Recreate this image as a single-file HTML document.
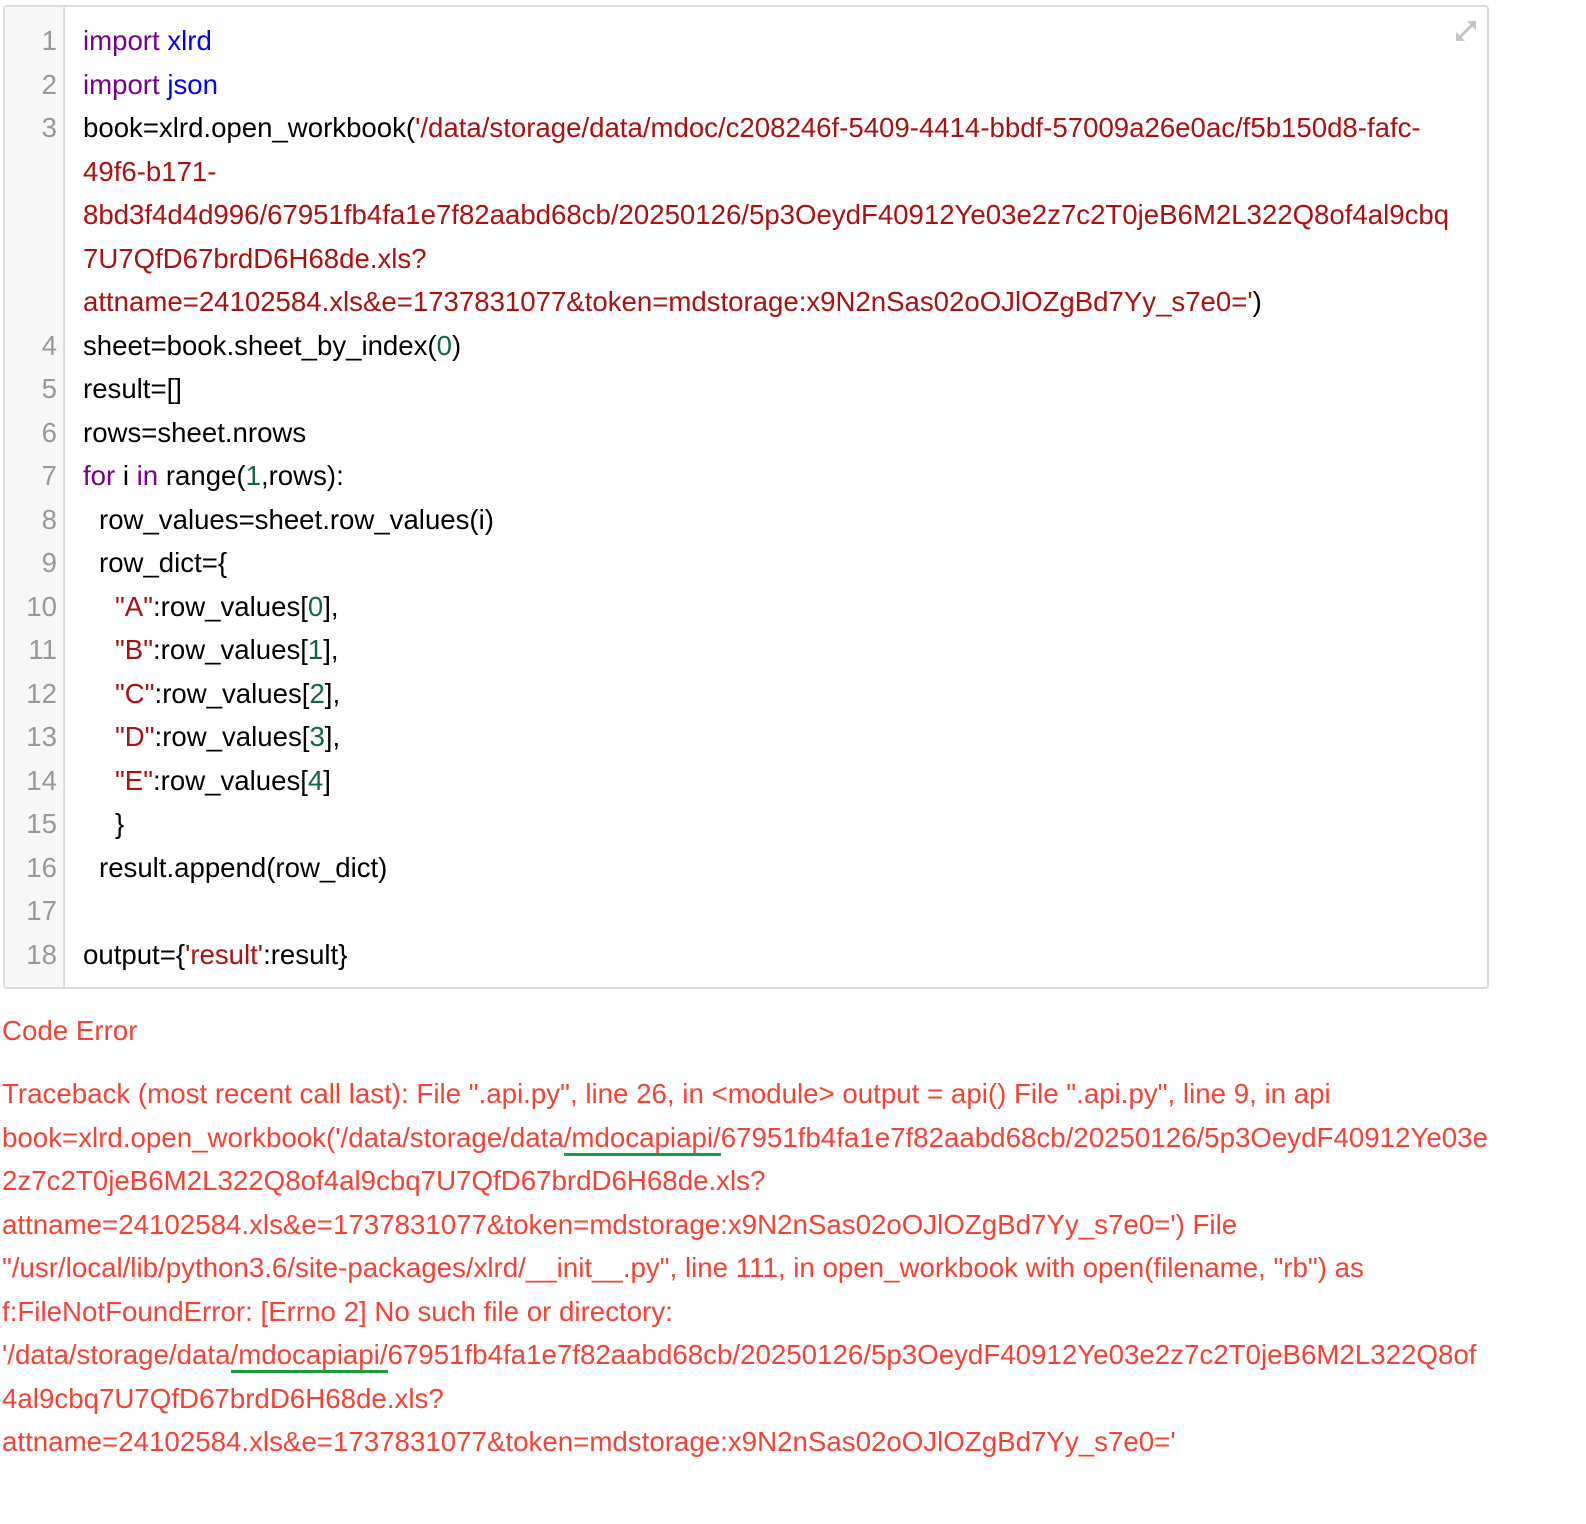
<!DOCTYPE html>
<html><head><meta charset="utf-8"><style>
body{margin:0;background:#fff;width:1586px;height:1524px;overflow:hidden;font-family:"Liberation Sans",Arial,sans-serif;}
.box{position:absolute;left:3px;top:5px;width:1486px;height:984px;border:2px solid #ddd;border-radius:4px;box-sizing:border-box;}
.gut{position:absolute;left:0;top:0;width:58px;height:100%;background:#f7f7f7;border-right:2px solid #ddd;}
.code{position:absolute;left:0;top:12px;font-size:27.6px;line-height:43.5px;white-space:nowrap;}
.ln{position:absolute;left:0;width:52px;text-align:right;color:#999;}
.tx{position:absolute;left:78px;color:#000;}
.k{color:#708}.v{color:#00f}.s{color:#a11}.n{color:#164}
.err{position:absolute;left:2px;color:#f44336;font-size:27.7px;line-height:43.5px;white-space:nowrap;}
.u{border-bottom:3px solid #1a9e3f;padding-bottom:0}
</style></head><body>
<div class="box"><div class="gut"></div>
<svg style="position:absolute;left:1449px;top:12px" width="24" height="24" viewBox="0 0 24 24"><path d="M4 20L20 4" stroke="#c4c4c4" stroke-width="3"/><path d="M13 2H22V11Z" fill="#c4c4c4"/><path d="M2 13V22H11Z" fill="#c4c4c4"/></svg>
<div class="code">
<div class="ln" style="top:0">1</div><div class="tx" style="top:0"><span class="k">import</span> <span class="v">xlrd</span></div>
<div class="ln" style="top:43.5px">2</div><div class="tx" style="top:43.5px"><span class="k">import</span> <span class="v">json</span></div>
<div class="ln" style="top:87px">3</div><div class="tx" style="top:87px">book=xlrd.open_workbook(<span class="s">'/data/storage/data/mdoc/c208246f-5409-4414-bbdf-57009a26e0ac/f5b150d8-fafc-</span></div>
<div class="tx s" style="top:130.5px">49f6-b171-</div>
<div class="tx s" style="top:174px">8bd3f4d4d996/67951fb4fa1e7f82aabd68cb/20250126/5p3OeydF40912Ye03e2z7c2T0jeB6M2L322Q8of4al9cbq</div>
<div class="tx s" style="top:217.5px">7U7QfD67brdD6H68de.xls?</div>
<div class="tx" style="top:261px"><span class="s">attname=24102584.xls&amp;e=1737831077&amp;token=mdstorage:x9N2nSas02oOJlOZgBd7Yy_s7e0='</span>)</div>
<div class="ln" style="top:304.5px">4</div><div class="tx" style="top:304.5px">sheet=book.sheet_by_index(<span class="n">0</span>)</div>
<div class="ln" style="top:348px">5</div><div class="tx" style="top:348px">result=[]</div>
<div class="ln" style="top:391.5px">6</div><div class="tx" style="top:391.5px">rows=sheet.nrows</div>
<div class="ln" style="top:435px">7</div><div class="tx" style="top:435px"><span class="k">for</span> i <span class="k">in</span> range(<span class="n">1</span>,rows):</div>
<div class="ln" style="top:478.5px">8</div><div class="tx" style="top:478.5px;left:94px">row_values=sheet.row_values(i)</div>
<div class="ln" style="top:522px">9</div><div class="tx" style="top:522px;left:94px">row_dict={</div>
<div class="ln" style="top:565.5px">10</div><div class="tx" style="top:565.5px;left:110px"><span class="s">"A"</span>:row_values[<span class="n">0</span>],</div>
<div class="ln" style="top:609px">11</div><div class="tx" style="top:609px;left:110px"><span class="s">"B"</span>:row_values[<span class="n">1</span>],</div>
<div class="ln" style="top:652.5px">12</div><div class="tx" style="top:652.5px;left:110px"><span class="s">"C"</span>:row_values[<span class="n">2</span>],</div>
<div class="ln" style="top:696px">13</div><div class="tx" style="top:696px;left:110px"><span class="s">"D"</span>:row_values[<span class="n">3</span>],</div>
<div class="ln" style="top:739.5px">14</div><div class="tx" style="top:739.5px;left:110px"><span class="s">"E"</span>:row_values[<span class="n">4</span>]</div>
<div class="ln" style="top:783px">15</div><div class="tx" style="top:783px;left:110px">}</div>
<div class="ln" style="top:826.5px">16</div><div class="tx" style="top:826.5px;left:94px">result.append(row_dict)</div>
<div class="ln" style="top:870px">17</div>
<div class="ln" style="top:913.5px">18</div><div class="tx" style="top:913.5px">output={<span class="s">'result'</span>:result}</div>
</div></div>
<div class="err" style="top:1009px">Code Error</div>
<div class="err" style="top:1072px">Traceback (most recent call last): File ".api.py", line 26, in &lt;module&gt; output = api() File ".api.py", line 9, in api</div>
<div class="err" style="top:1115.5px">book=xlrd.open_workbook('/data/storage/data<span class="u">/mdocapiapi/</span>67951fb4fa1e7f82aabd68cb/20250126/5p3OeydF40912Ye03e</div>
<div class="err" style="top:1159px">2z7c2T0jeB6M2L322Q8of4al9cbq7U7QfD67brdD6H68de.xls?</div>
<div class="err" style="top:1202.5px">attname=24102584.xls&amp;e=1737831077&amp;token=mdstorage:x9N2nSas02oOJlOZgBd7Yy_s7e0=') File</div>
<div class="err" style="top:1246px">"/usr/local/lib/python3.6/site-packages/xlrd/__init__.py", line 111, in open_workbook with open(filename, "rb") as</div>
<div class="err" style="top:1289.5px">f:FileNotFoundError: [Errno 2] No such file or directory:</div>
<div class="err" style="top:1333px">'/data/storage/data<span class="u">/mdocapiapi/</span>67951fb4fa1e7f82aabd68cb/20250126/5p3OeydF40912Ye03e2z7c2T0jeB6M2L322Q8of</div>
<div class="err" style="top:1376.5px">4al9cbq7U7QfD67brdD6H68de.xls?</div>
<div class="err" style="top:1420px">attname=24102584.xls&amp;e=1737831077&amp;token=mdstorage:x9N2nSas02oOJlOZgBd7Yy_s7e0='</div>
</body></html>
